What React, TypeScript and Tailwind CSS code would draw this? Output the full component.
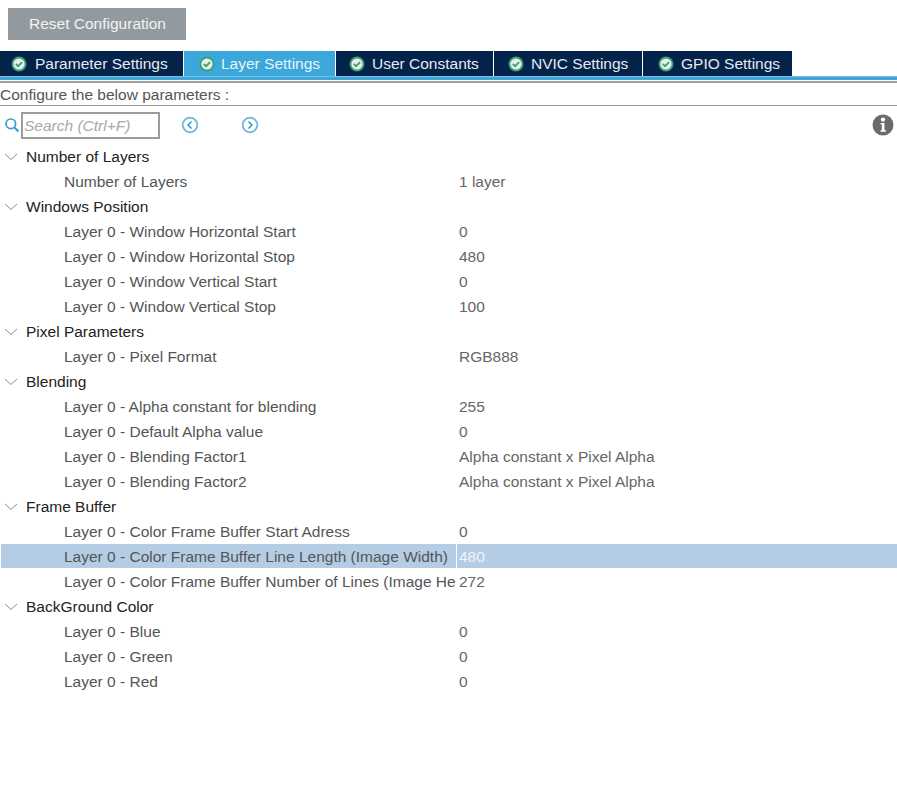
import React from 'react';

const groups: { title: string; rows: [string, string][] }[] = [
  { title: 'Number of Layers', rows: [['Number of Layers', '1 layer']] },
  {
    title: 'Windows Position',
    rows: [
      ['Layer 0 - Window Horizontal Start', '0'],
      ['Layer 0 - Window Horizontal Stop', '480'],
      ['Layer 0 - Window Vertical Start', '0'],
      ['Layer 0 - Window Vertical Stop', '100'],
    ],
  },
  { title: 'Pixel Parameters', rows: [['Layer 0 - Pixel Format', 'RGB888']] },
  {
    title: 'Blending',
    rows: [
      ['Layer 0 - Alpha constant for blending', '255'],
      ['Layer 0 - Default Alpha value', '0'],
      ['Layer 0 - Blending Factor1', 'Alpha constant x Pixel Alpha'],
      ['Layer 0 - Blending Factor2', 'Alpha constant x Pixel Alpha'],
    ],
  },
  {
    title: 'Frame Buffer',
    rows: [
      ['Layer 0 - Color Frame Buffer Start Adress', '0'],
      ['Layer 0 - Color Frame Buffer Line Length (Image Width)', '480'],
      ['Layer 0 - Color Frame Buffer Number of Lines (Image He', '272'],
    ],
  },
  {
    title: 'BackGround Color',
    rows: [
      ['Layer 0 - Blue', '0'],
      ['Layer 0 - Green', '0'],
      ['Layer 0 - Red', '0'],
    ],
  },
];

const tabs = [
  { label: 'Parameter Settings', width: 'w-[183px]', pad: 'pl-[11px] gap-[8px]' },
  { label: 'Layer Settings', width: 'w-[151px]', pad: 'pl-[15px] gap-[6px]', active: true },
  { label: 'User Constants', width: 'w-[157px]', pad: 'pl-[13px] gap-[7px]' },
  { label: 'NVIC Settings', width: 'w-[148px]', pad: 'pl-[14px] gap-[7px]' },
  { label: 'GPIO Settings', width: 'w-[149px]', pad: 'pl-[15px] gap-[7px]' },
];

const CheckBadge = () => (
  <svg width="16" height="16" viewBox="0 0 16 16" className="shrink-0">
    <circle cx="8" cy="8" r="7.5" fill="#3f9f72" />
    <circle cx="8" cy="8" r="5.6" fill="#e4f1ea" />
    <path d="M4.8 8l2.3 2.2 4-4" fill="none" stroke="#3f9f72" strokeWidth="1.8" />
  </svg>
);

const Chevron = () => (
  <svg width="14" height="8" viewBox="0 0 14 8" className="shrink-0">
    <path d="M1 1l6 5.5L13 1" fill="none" stroke="#8c8c8c" strokeWidth="1" />
  </svg>
);

const Arrow = ({ dir }: { dir: 'left' | 'right' }) => (
  <svg width="18" height="18" viewBox="0 0 18 18">
    <circle cx="9" cy="9" r="7.3" fill="none" stroke="#6cb8dc" strokeWidth="1.8" />
    <path
      d={dir === 'left' ? 'M10.5 5.5L7 9l3.5 3.5' : 'M7.5 5.5L11 9l-3.5 3.5'}
      fill="none"
      stroke="#3a9cc9"
      strokeWidth="1.5"
    />
  </svg>
);

export default function App() {
  return (
    <div className="w-[897px] h-[807px] bg-white overflow-hidden font-['Liberation_Sans',sans-serif] text-[15.5px]">
      <div className="pt-2 pl-2">
        <button className="w-[178px] h-[32px] bg-[#929a9f] text-[#f2f3f3] text-center pl-[1px]">Reset Configuration</button>
      </div>

      {/* tabs */}
      <div className="flex gap-[1px] mt-[11px] h-[25px]">
        {tabs.map((t) => (
          <div
            key={t.label}
            className={`flex items-center ${t.width} ${t.pad} ${t.active ? 'bg-[#3ba7da] text-[#e8f4fa]' : 'bg-[#03234b] text-[#e6eaee]'}`}
          >
            <CheckBadge />
            <span className="leading-[23px] mb-[1px]">{t.label}</span>
          </div>
        ))}
      </div>
      <div className="h-[1px] bg-[#7fbcd8]" />
      <div className="h-[3px] bg-[#3ba7da]" />
      <div className="h-[1px] bg-white" />
      <div className="h-[2px] bg-[#9aa0a4]" />

      <div className="h-[22px] leading-[23px] text-[#555555]">Configure the below parameters :</div>
      <div className="h-[1px] bg-[#9a9a9a]" />

      {/* search bar */}
      <div className="relative flex items-center h-[38px]">
        <svg width="16" height="16" viewBox="0 0 16 16" className="ml-[4px] shrink-0">
          <circle cx="6.8" cy="6.8" r="4.8" fill="none" stroke="#3a9cd0" strokeWidth="1.7" />
          <path d="M10.5 10.5l4 4" stroke="#3a9cd0" strokeWidth="2" />
        </svg>
        <div className="ml-[1px] w-[139px] h-[27px] border-2 border-[#9c9c9c] pl-[1px] leading-[24px] italic text-[#a9a9a9] whitespace-nowrap">
          Search (Ctrl+F)
        </div>
        <div className="ml-[21px]"><Arrow dir="left" /></div>
        <div className="ml-[42px]"><Arrow dir="right" /></div>
        <svg width="22" height="22" viewBox="0 0 22 22" className="absolute right-[3px] top-[8px]">
          <circle cx="11" cy="11" r="10.5" fill="#6b6b6b" />
          <circle cx="11" cy="5.6" r="2.2" fill="#fff" />
          <path d="M8.6 9h3.9v7.2h1.4v1.6H8.5v-1.6h1.3v-5.6H8.6z" fill="#fff" />
        </svg>
      </div>

      {/* parameter tree */}
      <div>
        {groups.map((g) => (
          <div key={g.title}>
            <div className="flex items-center h-[25px] text-[#222222]">
              <span className="ml-[4px] mr-[8px] flex"><Chevron /></span>
              {g.title}
            </div>
            {g.rows.map(([name, value]) => {
              const selected = name.includes('Line Length');
              return (
                <div
                  key={name}
                  className={`flex h-[25px] leading-[25px] ml-[1px] ${selected ? 'bg-[#b4cde4] border-b border-white' : ''}`}
                >
                  <div className={`w-[456px] pl-[63px] text-[#555555] whitespace-nowrap shrink-0 ${selected ? 'border-r border-white' : ''}`}>
                    {name}
                  </div>
                  <div className={`pl-[2px] ${selected ? 'text-[#eef3f8]' : 'text-[#666666]'}`}>{value}</div>
                </div>
              );
            })}
          </div>
        ))}
      </div>
    </div>
  );
}
